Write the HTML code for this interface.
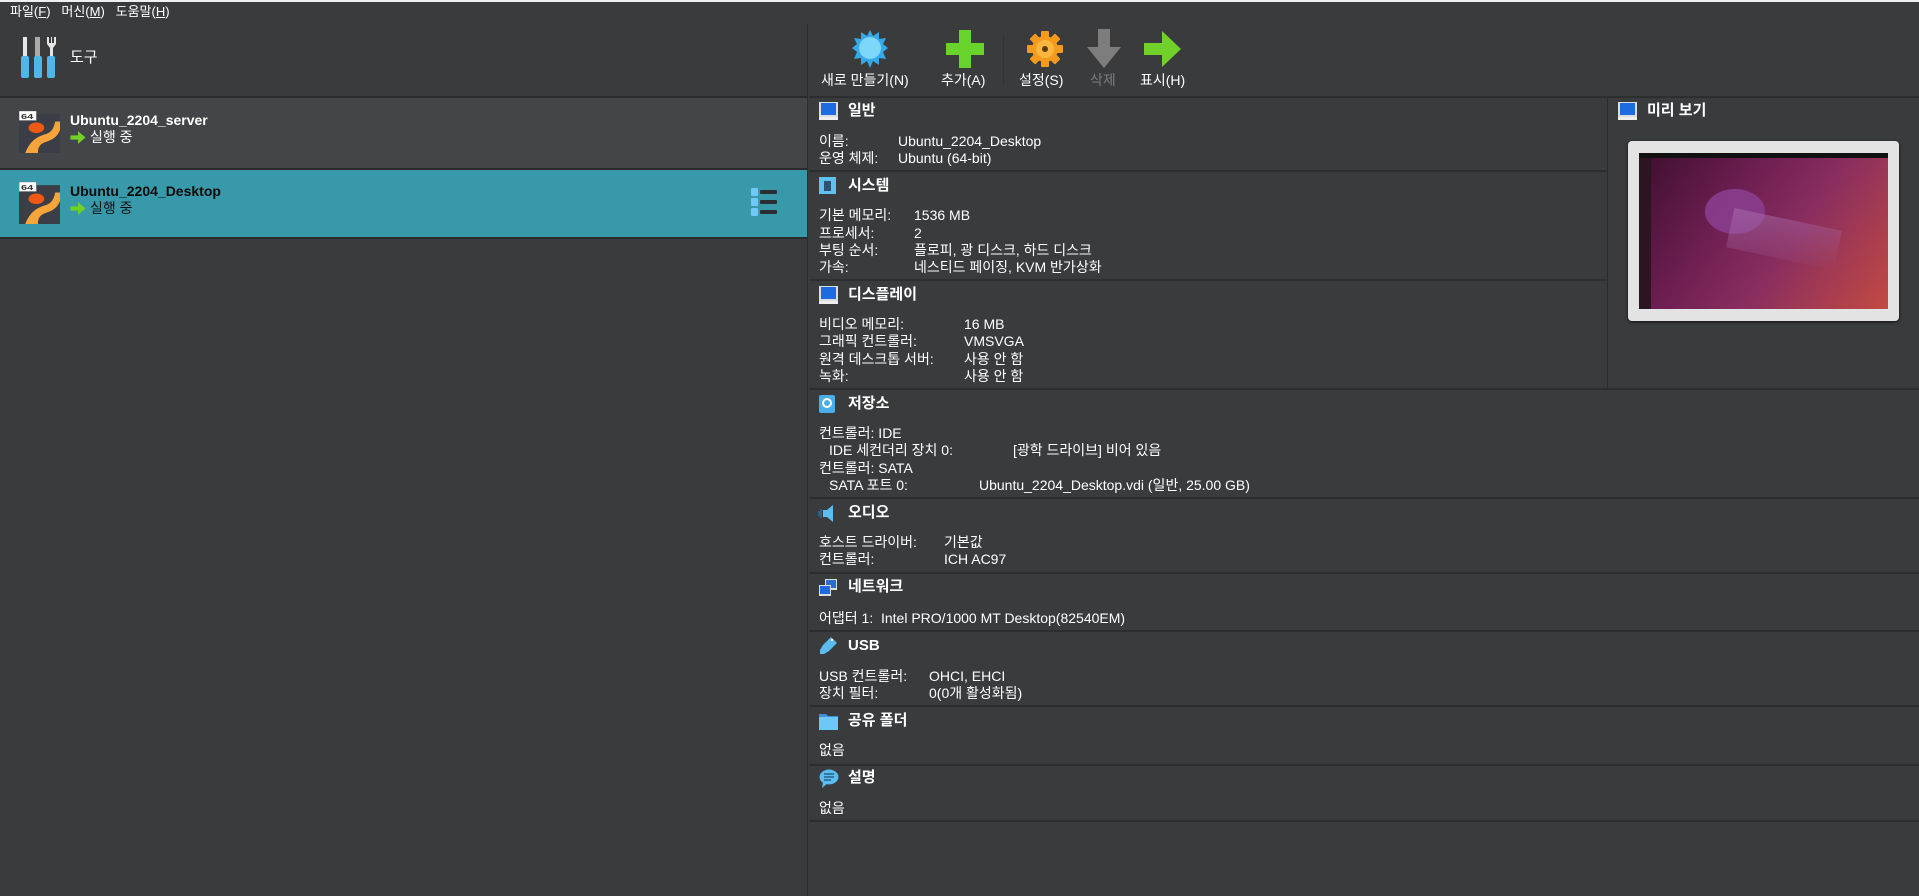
<!DOCTYPE html>
<html><head><meta charset="utf-8"><style>
*{margin:0;padding:0;box-sizing:border-box}
body{width:1919px;height:896px;overflow:hidden;background:#3a3b3d;font-family:"Liberation Sans","Noto Sans CJK KR","NanumGothic",sans-serif;color:#fff;position:relative;font-size:14px}
.a{position:absolute;white-space:nowrap;line-height:18px}
.h{font-weight:bold;font-size:15px}
.sep{position:absolute;left:809px;right:0;height:2px;background:#2d2e30}
.ic{position:absolute}
</style></head><body>
<div style="position:absolute;left:0;top:0;width:1919px;height:2px;background:#f0f0f0"></div>
<div class="a" style="left:10px;top:3px;font-size:13px">파일(<u>F</u>)&nbsp;&nbsp; 머신(<u>M</u>)&nbsp;&nbsp; 도움말(<u>H</u>)</div>
<!-- left pane -->
<svg class="ic" style="left:20px;top:37px" width="40" height="42" viewBox="0 0 40 42">
<rect x="3" y="0" width="4" height="20" fill="#e6e6e6"/><rect x="1" y="19" width="8" height="22" rx="2" fill="#4fb6ea"/>
<rect x="15" y="0" width="5" height="20" fill="#aaa"/><rect x="14" y="19" width="8" height="22" rx="2" fill="#4fb6ea"/>
<path d="M27 0v7l3 4v9h3V11l3-4V0h-2v6h-2V0h-1v6h-2V0z" fill="#e6e6e6"/><rect x="27" y="19" width="8" height="22" rx="2" fill="#4fb6ea"/>
</svg>
<div class="a" style="left:70px;top:49px;font-size:15px">도구</div>
<div style="position:absolute;left:0;top:96px;width:807px;height:2px;background:#2a2b2d"></div>
<div style="position:absolute;left:0;top:98px;width:807px;height:70px;background:#444548"></div>
<div style="position:absolute;left:0;top:168px;width:807px;height:2px;background:#2a2b2d"></div>
<div style="position:absolute;left:0;top:170px;width:807px;height:67px;background:#3799a9"></div>
<div style="position:absolute;left:0;top:237px;width:807px;height:2px;background:#2a2b2d"></div>
<!-- VM icons -->
<svg class="ic" style="left:19px;top:111px" width="41" height="42" viewBox="0 0 26 40" preserveAspectRatio="none"><rect x="0" y="3" width="26" height="37" fill="#3b3e47"/><circle cx="11" cy="16" r="5" fill="#ee5a14"/><path d="M4 40c3-12 8-16 13-18 4-2 5-6 6-12l3 0v8c-2 8-6 10-10 12-3 2-4 5-4 10z" fill="#f7a43a"/><rect x="0" y="0" width="11" height="9" fill="#fff" stroke="#888" stroke-width=".5"/><text x="1.3" y="7.5" font-size="7" fill="#333" font-family="Liberation Sans" font-weight="bold">64</text></svg>
<svg class="ic" style="left:19px;top:182px" width="41" height="42" viewBox="0 0 26 40" preserveAspectRatio="none"><rect x="0" y="3" width="26" height="37" fill="#3b3e47"/><circle cx="11" cy="16" r="5" fill="#ee5a14"/><path d="M4 40c3-12 8-16 13-18 4-2 5-6 6-12l3 0v8c-2 8-6 10-10 12-3 2-4 5-4 10z" fill="#f7a43a"/><rect x="0" y="0" width="11" height="9" fill="#fff" stroke="#888" stroke-width=".5"/><text x="1.3" y="7.5" font-size="7" fill="#333" font-family="Liberation Sans" font-weight="bold">64</text></svg>
<div class="a" style="left:70px;top:111px;font-weight:bold;font-size:14px">Ubuntu_2204_server</div>
<svg class="ic" style="left:70px;top:130px" width="16" height="15" viewBox="0 0 14 14"><path d="M0 5h7V1l7 6-7 6V9H0z" fill="#6fd12a"/></svg>
<div class="a" style="left:90px;top:128px">실행 중</div>
<div class="a" style="left:70px;top:182px;font-weight:bold;font-size:14px;color:#0a0a0a">Ubuntu_2204_Desktop</div>
<svg class="ic" style="left:70px;top:201px" width="16" height="15" viewBox="0 0 14 14"><path d="M0 5h7V1l7 6-7 6V9H0z" fill="#6fd12a"/></svg>
<div class="a" style="left:90px;top:199px;color:#111">실행 중</div>
<svg class="ic" style="left:751px;top:187px" width="32" height="30"><rect x="0" y="1" width="7" height="8" rx="1" fill="#6fc8f5"/><rect x="0" y="11" width="7" height="8" rx="1" fill="#6fc8f5"/><rect x="0" y="21" width="7" height="8" rx="1" fill="#6fc8f5"/><rect x="9" y="3" width="17" height="4" rx="1" fill="#2a2d31"/><rect x="9" y="13" width="17" height="4" rx="1" fill="#2a2d31"/><rect x="9" y="23" width="17" height="4" rx="1" fill="#2a2d31"/></svg>
<div style="position:absolute;left:807px;top:24px;width:1px;height:872px;background:#2b2c2e"></div>
<!-- toolbar -->
<svg class="ic" style="left:852px;top:30px" width="36" height="38" viewBox="0 0 36 38"><polygon points="18,0 21,6 27,2 27,9 34,8 31,14 36,18 31,22 34,29 27,28 27,35 21,31 18,38 15,31 9,35 9,28 2,29 5,22 0,18 5,14 2,8 9,9 9,2 15,6" fill="#34a9ec"/><circle cx="18" cy="18" r="11" fill="#7fd6fb"/></svg>
<svg class="ic" style="left:946px;top:30px" width="40" height="38"><path d="M13 0h12v13h13v12H25v13H13V25H0V13h13z" fill="#68d32a"/></svg>
<div style="position:absolute;left:1003px;top:34px;width:1px;height:52px;background:#333"></div>
<svg class="ic" style="left:1026px;top:30px" width="38" height="38" viewBox="-19 -19 38 38">
<g fill="#f49b1e"><rect x="-4" y="-18" width="8" height="36" rx="1"/><rect x="-4" y="-18" width="8" height="36" rx="1" transform="rotate(45)"/><rect x="-4" y="-18" width="8" height="36" rx="1" transform="rotate(90)"/><rect x="-4" y="-18" width="8" height="36" rx="1" transform="rotate(135)"/><circle r="13"/></g>
<circle r="9" fill="#fbb63e"/><circle r="3" fill="#5b3b0b"/></svg>
<svg class="ic" style="left:1086px;top:29px" width="36" height="40"><path d="M12 0h12v18h11L18 39 1 18h11z" fill="#7d7d7d"/></svg>
<svg class="ic" style="left:1144px;top:31px" width="38" height="36"><path d="M0 12h18V0l19 18-19 18V24H0z" fill="#6fd12a"/></svg>
<div class="a" style="left:821px;top:71px;font-size:14px">새로 만들기(N)</div>
<div class="a" style="left:941px;top:71px;font-size:14px">추가(A)</div>
<div class="a" style="left:1019px;top:71px;font-size:14px">설정(S)</div>
<div class="a" style="left:1090px;top:71px;font-size:14px;color:#7b7c7e">삭제</div>
<div class="a" style="left:1140px;top:71px;font-size:14px">표시(H)</div>
<div class="sep" style="top:96px"></div>
<!-- preview -->
<div style="position:absolute;left:1607px;top:98px;width:1px;height:292px;background:#2b2c2e"></div>
<svg class="ic" style="left:1618px;top:102px" width="20" height="19"><rect x="0" y="0" width="19" height="15" fill="#ddd"/><rect x="2" y="1" width="15" height="12" fill="#1c6be0"/><rect x="0" y="15" width="19" height="3" fill="#eee"/></svg>
<div class="a h" style="left:1647px;top:102px">미리 보기</div>
<div style="position:absolute;left:1628px;top:141px;width:271px;height:180px;background:#e3e3e3;border-radius:4px;box-shadow:0 1px 3px #111"></div>
<div style="position:absolute;left:1639px;top:153px;width:249px;height:156px;background:linear-gradient(125deg,#3c0f2c 0%,#6d1e52 35%,#8a2e5f 60%,#c24a42 100%);overflow:hidden">
<div style="position:absolute;left:0;top:0;width:249px;height:5px;background:#111"></div>
<div style="position:absolute;left:0;top:5px;width:12px;height:151px;background:#2b1522"></div>
<div style="position:absolute;left:66px;top:36px;width:60px;height:45px;border-radius:50%;background:#8a3d8e;opacity:.9"></div>
<div style="position:absolute;left:90px;top:66px;width:110px;height:40px;background:linear-gradient(160deg,#a76aa8,transparent);transform:rotate(12deg);opacity:.6"></div>
</div>
<!-- sections -->
<svg class="ic" style="left:819px;top:102px" width="20" height="19"><rect x="0" y="0" width="19" height="15" fill="#ddd"/><rect x="2" y="1" width="15" height="12" fill="#1c6be0"/><rect x="0" y="15" width="19" height="3" fill="#eee"/></svg>
<div class="a h" style="left:848px;top:102px">일반</div>
<div class="a" style="left:819px;top:132px">이름:</div><div class="a" style="left:898px;top:132px">Ubuntu_2204_Desktop</div>
<div class="a" style="left:819px;top:149px">운영 체제:</div><div class="a" style="left:898px;top:149px">Ubuntu (64-bit)</div>
<div class="sep" style="top:170px;right:312px"></div>

<svg class="ic" style="left:819px;top:177px" width="18" height="18"><rect width="17" height="17" fill="#5fc1f2"/><rect x="5" y="4" width="7" height="10" fill="#2c5270"/></svg>
<div class="a h" style="left:848px;top:177px">시스템</div>
<div class="a" style="left:819px;top:206px">기본 메모리:</div><div class="a" style="left:914px;top:206px">1536 MB</div>
<div class="a" style="left:819px;top:224px">프로세서:</div><div class="a" style="left:914px;top:224px">2</div>
<div class="a" style="left:819px;top:241px">부팅 순서:</div><div class="a" style="left:914px;top:241px">플로피, 광 디스크, 하드 디스크</div>
<div class="a" style="left:819px;top:258px">가속:</div><div class="a" style="left:914px;top:258px">네스티드 페이징, KVM 반가상화</div>
<div class="sep" style="top:279px;right:312px"></div>

<svg class="ic" style="left:819px;top:286px" width="20" height="19"><rect x="0" y="0" width="19" height="15" fill="#ddd"/><rect x="2" y="1" width="15" height="12" fill="#1c6be0"/><rect x="0" y="15" width="19" height="3" fill="#eee"/></svg>
<div class="a h" style="left:848px;top:286px">디스플레이</div>
<div class="a" style="left:819px;top:315px">비디오 메모리:</div><div class="a" style="left:964px;top:315px">16 MB</div>
<div class="a" style="left:819px;top:332px">그래픽 컨트롤러:</div><div class="a" style="left:964px;top:332px">VMSVGA</div>
<div class="a" style="left:819px;top:350px">원격 데스크톱 서버:</div><div class="a" style="left:964px;top:350px">사용 안 함</div>
<div class="a" style="left:819px;top:367px">녹화:</div><div class="a" style="left:964px;top:367px">사용 안 함</div>
<div class="sep" style="top:388px"></div>

<svg class="ic" style="left:819px;top:395px" width="17" height="19"><rect width="16" height="18" rx="2" fill="#4aaee8"/><circle cx="8" cy="8" r="4" fill="none" stroke="#fff" stroke-width="2"/></svg>
<div class="a h" style="left:848px;top:395px">저장소</div>
<div class="a" style="left:819px;top:424px">컨트롤러: IDE</div>
<div class="a" style="left:829px;top:441px">IDE 세컨더리 장치 0:</div><div class="a" style="left:1013px;top:441px">[광학 드라이브] 비어 있음</div>
<div class="a" style="left:819px;top:459px">컨트롤러: SATA</div>
<div class="a" style="left:829px;top:476px">SATA 포트 0:</div><div class="a" style="left:979px;top:476px">Ubuntu_2204_Desktop.vdi (일반, 25.00 GB)</div>
<div class="sep" style="top:497px"></div>

<svg class="ic" style="left:818px;top:504px" width="20" height="19"><path d="M5 6h4l6-5v17l-6-5H5z" fill="#5bbcf0"/><path d="M3 5v9M1 7v5" stroke="#2f7fc0" stroke-width="1"/></svg>
<div class="a h" style="left:848px;top:504px">오디오</div>
<div class="a" style="left:819px;top:533px">호스트 드라이버:</div><div class="a" style="left:944px;top:533px">기본값</div>
<div class="a" style="left:819px;top:550px">컨트롤러:</div><div class="a" style="left:944px;top:550px">ICH AC97</div>
<div class="sep" style="top:572px"></div>

<svg class="ic" style="left:819px;top:579px" width="19" height="18"><rect x="6" y="0" width="12" height="11" fill="#ddd"/><rect x="7" y="1" width="10" height="8" fill="#2a6fd0"/><rect x="0" y="6" width="12" height="11" fill="#ddd"/><rect x="1" y="7" width="10" height="8" fill="#1c6be0"/></svg>
<div class="a h" style="left:848px;top:578px">네트워크</div>
<div class="a" style="left:819px;top:609px">어댑터 1:&nbsp; Intel PRO/1000 MT Desktop(82540EM)</div>
<div class="sep" style="top:630px"></div>

<svg class="ic" style="left:819px;top:636px" width="19" height="19"><path d="M12 1l6 6-8 8-5 3-4 0 0-4 3-5z" fill="#5bbcf0"/><rect x="12" y="3" width="2" height="2" fill="#fff"/></svg>
<div class="a h" style="left:848px;top:637px">USB</div>
<div class="a" style="left:819px;top:667px">USB 컨트롤러:</div><div class="a" style="left:929px;top:667px">OHCI, EHCI</div>
<div class="a" style="left:819px;top:684px">장치 필터:</div><div class="a" style="left:929px;top:684px">0(0개 활성화됨)</div>
<div class="sep" style="top:705px"></div>

<svg class="ic" style="left:819px;top:712px" width="20" height="18"><path d="M0 2h7l2 2h10v14H0z" fill="#3d8fe0"/><rect x="0" y="5" width="19" height="13" fill="#6cc8f7"/></svg>
<div class="a h" style="left:848px;top:712px">공유 폴더</div>
<div class="a" style="left:819px;top:741px">없음</div>
<div class="sep" style="top:764px"></div>

<svg class="ic" style="left:819px;top:769px" width="20" height="20"><ellipse cx="10" cy="8" rx="9.5" ry="7.5" fill="#5bbcf0"/><path d="M4 13l-1 6 6-5z" fill="#5bbcf0"/><path d="M5 5h10M5 8h10M5 11h7" stroke="#1d4e74" stroke-width="1.3"/></svg>
<div class="a h" style="left:848px;top:769px">설명</div>
<div class="a" style="left:819px;top:799px">없음</div>
<div class="sep" style="top:820px"></div>
</body></html>
